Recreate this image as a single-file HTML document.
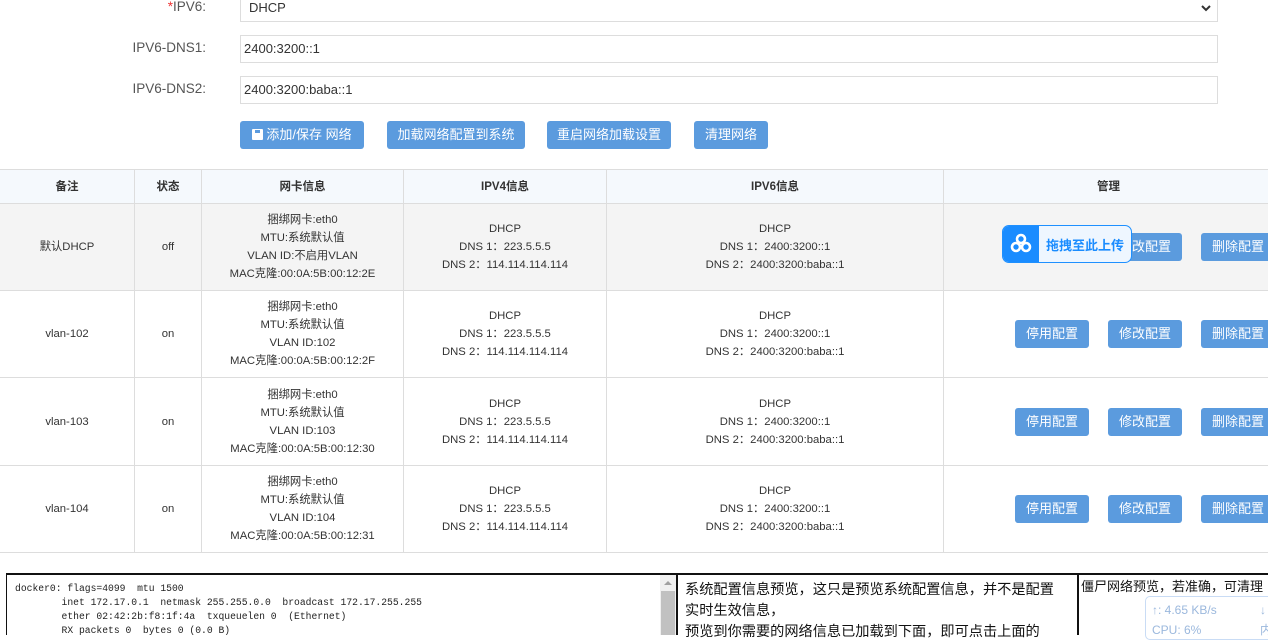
<!DOCTYPE html>
<html><head><meta charset="utf-8"><style>
*{box-sizing:border-box;margin:0;padding:0}
body{width:1268px;height:635px;overflow:hidden;background:#fff;font-family:"Liberation Sans","Noto Sans CJK SC",sans-serif;color:#333;position:relative;font-size:12px}
.abs{position:absolute}
.lbl{position:absolute;right:1062px;font-size:13.5px;color:#555;text-align:right}
.inp{position:absolute;left:240px;width:978px;height:28px;border:1px solid #ddd;background:#fff;font-size:13px;padding:0 3px;line-height:26px;color:#333}
.btn{position:absolute;background:#5b9bde;color:#fff;border-radius:3px;font-size:13px;text-align:center;height:28px;line-height:28px}
.cell{position:absolute;text-align:center;font-size:11.3px;line-height:18px;display:flex;align-items:center;justify-content:center;flex-direction:column;border-right:1px solid #ddd;border-bottom:1px solid #ddd}
.hd{font-weight:bold;font-size:11.5px;background:#f5f9fd}
.rb{position:absolute;width:74px;height:28px;line-height:28px;background:#5b9bde;color:#fff;border-radius:3px;font-size:13px;text-align:center}
pre{font-family:"Liberation Mono",monospace;font-size:9.7px;line-height:14px;color:#222}
</style></head><body>
<div class="lbl" style="top:-1px"><span style="color:#e33">*</span>IPV6:</div>
<div class="inp" style="top:-6px;padding-left:8px">DHCP<svg class="abs" style="right:6px;top:10px" width="10" height="7" viewBox="0 0 10 7"><path d="M1 1l4 4 4-4" stroke="#333" stroke-width="2" fill="none"/></svg></div>
<div class="lbl" style="top:40px">IPV6-DNS1:</div>
<div class="inp" style="top:35px">2400:3200::1</div>
<div class="lbl" style="top:81px">IPV6-DNS2:</div>
<div class="inp" style="top:76px">2400:3200:baba::1</div>
<div class="btn" style="left:240px;top:121px;width:124px"><span style="display:inline-block;width:11px;height:11px;background:#fff;vertical-align:-1px;margin-right:3px;border-radius:1px;position:relative"><span style="position:absolute;left:3px;top:1px;width:5px;height:3px;background:#5b9bde"></span></span>添加/保存 网络</div>
<div class="btn" style="left:387px;top:121px;width:138px">加载网络配置到系统</div>
<div class="btn" style="left:547px;top:121px;width:124px">重启网络加载设置</div>
<div class="btn" style="left:694px;top:121px;width:74px">清理网络</div>

<div class="abs" style="left:0;top:169px;width:1268px;height:1px;background:#ddd"></div>
<div class="cell hd" style="left:0;top:170px;width:135px;height:34px">备注</div>
<div class="cell hd" style="left:135px;top:170px;width:67px;height:34px">状态</div>
<div class="cell hd" style="left:202px;top:170px;width:202px;height:34px">网卡信息</div>
<div class="cell hd" style="left:404px;top:170px;width:203px;height:34px">IPV4信息</div>
<div class="cell hd" style="left:607px;top:170px;width:337px;height:34px">IPV6信息</div>
<div class="cell hd" style="left:944px;top:170px;width:330px;height:34px">管理</div>

<div class="abs" style="left:0;top:204px;width:1268px;height:87px;background:#f4f4f4"></div>
<div class="cell" style="left:0;top:204px;width:135px;height:87px">默认DHCP</div>
<div class="cell" style="left:135px;top:204px;width:67px;height:87px">off</div>
<div class="cell" style="left:202px;top:204px;width:202px;height:87px">捆绑网卡:eth0<br>MTU:系统默认值<br>VLAN ID:不启用VLAN<br>MAC克隆:00:0A:5B:00:12:2E</div>
<div class="cell" style="left:404px;top:204px;width:203px;height:87px">DHCP<br>DNS 1：223.5.5.5<br>DNS 2：114.114.114.114</div>
<div class="cell" style="left:607px;top:204px;width:337px;height:87px">DHCP<br>DNS 1：2400:3200::1<br>DNS 2：2400:3200:baba::1</div>
<div class="cell" style="left:944px;top:204px;width:330px;height:87px"></div>
<div class="rb" style="left:1108px;top:233px">修改配置</div>
<div class="rb" style="left:1201px;top:233px">删除配置</div>
<div class="abs" style="left:1002px;top:225px;width:130px;height:38px;border:1px solid #1e90ff;border-radius:7px;background:#eef6ff"></div>
<div class="abs" style="left:1003px;top:226px;width:36px;height:36px;background:#1a8cff;border-radius:6px 0 0 6px"><svg width="36" height="36" viewBox="0 0 36 36"><g fill="none" stroke="#fff" stroke-width="2.6"><circle cx="18" cy="13" r="4"/><circle cx="13" cy="21" r="4"/><circle cx="23" cy="21" r="4"/></g></svg></div>
<div class="abs" style="left:1046px;top:235px;font-size:13px;font-weight:bold;color:#1a8cff">拖拽至此上传</div>

<div class="cell" style="left:0;top:291px;width:135px;height:87px">vlan-102</div>
<div class="cell" style="left:135px;top:291px;width:67px;height:87px">on</div>
<div class="cell" style="left:202px;top:291px;width:202px;height:87px">捆绑网卡:eth0<br>MTU:系统默认值<br>VLAN ID:102<br>MAC克隆:00:0A:5B:00:12:2F</div>
<div class="cell" style="left:404px;top:291px;width:203px;height:87px">DHCP<br>DNS 1：223.5.5.5<br>DNS 2：114.114.114.114</div>
<div class="cell" style="left:607px;top:291px;width:337px;height:87px">DHCP<br>DNS 1：2400:3200::1<br>DNS 2：2400:3200:baba::1</div>
<div class="cell" style="left:944px;top:291px;width:330px;height:87px"></div>
<div class="rb" style="left:1015px;top:320px">停用配置</div>
<div class="rb" style="left:1108px;top:320px">修改配置</div>
<div class="rb" style="left:1201px;top:320px">删除配置</div>

<div class="cell" style="left:0;top:378px;width:135px;height:88px">vlan-103</div>
<div class="cell" style="left:135px;top:378px;width:67px;height:88px">on</div>
<div class="cell" style="left:202px;top:378px;width:202px;height:88px">捆绑网卡:eth0<br>MTU:系统默认值<br>VLAN ID:103<br>MAC克隆:00:0A:5B:00:12:30</div>
<div class="cell" style="left:404px;top:378px;width:203px;height:88px">DHCP<br>DNS 1：223.5.5.5<br>DNS 2：114.114.114.114</div>
<div class="cell" style="left:607px;top:378px;width:337px;height:88px">DHCP<br>DNS 1：2400:3200::1<br>DNS 2：2400:3200:baba::1</div>
<div class="cell" style="left:944px;top:378px;width:330px;height:88px"></div>
<div class="rb" style="left:1015px;top:408px">停用配置</div>
<div class="rb" style="left:1108px;top:408px">修改配置</div>
<div class="rb" style="left:1201px;top:408px">删除配置</div>

<div class="cell" style="left:0;top:466px;width:135px;height:87px">vlan-104</div>
<div class="cell" style="left:135px;top:466px;width:67px;height:87px">on</div>
<div class="cell" style="left:202px;top:466px;width:202px;height:87px">捆绑网卡:eth0<br>MTU:系统默认值<br>VLAN ID:104<br>MAC克隆:00:0A:5B:00:12:31</div>
<div class="cell" style="left:404px;top:466px;width:203px;height:87px">DHCP<br>DNS 1：223.5.5.5<br>DNS 2：114.114.114.114</div>
<div class="cell" style="left:607px;top:466px;width:337px;height:87px">DHCP<br>DNS 1：2400:3200::1<br>DNS 2：2400:3200:baba::1</div>
<div class="cell" style="left:944px;top:466px;width:330px;height:87px"></div>
<div class="rb" style="left:1015px;top:495px">停用配置</div>
<div class="rb" style="left:1108px;top:495px">修改配置</div>
<div class="rb" style="left:1201px;top:495px">删除配置</div>

<div class="abs" style="left:6px;top:573px;width:1262px;height:2px;background:#111"></div>
<div class="abs" style="left:6px;top:573px;width:1px;height:62px;background:#111"></div>
<pre class="abs" style="left:15px;top:582px">docker0: flags=4099  mtu 1500
        inet 172.17.0.1  netmask 255.255.0.0  broadcast 172.17.255.255
        ether 02:42:2b:f8:1f:4a  txqueuelen 0  (Ethernet)
        RX packets 0  bytes 0 (0.0 B)</pre>
<div class="abs" style="left:660px;top:575px;width:16px;height:60px;background:#f0f0f0"></div>
<div class="abs" style="left:661px;top:591px;width:14px;height:44px;background:#c1c1c1"></div>
<div class="abs" style="left:664px;top:581px;width:0;height:0;border-left:4px solid transparent;border-right:4px solid transparent;border-bottom:4px solid #a0a0a0"></div>
<div class="abs" style="left:676px;top:573px;width:2px;height:62px;background:#111"></div>
<div class="abs" style="left:685px;top:580px;font-size:14.2px;line-height:21px;color:#111;width:390px;white-space:nowrap">系统配置信息预览，这只是预览系统配置信息，并不是配置<br>实时生效信息，<br>预览到你需要的网络信息已加载到下面，即可点击上面的</div>
<div class="abs" style="left:1077px;top:573px;width:2px;height:62px;background:#111"></div>
<div class="abs" style="left:1081px;top:576px;font-size:13px;color:#111">僵尸网络预览，若准确，可清理</div>
<div class="abs" style="left:1145px;top:596px;width:130px;height:44px;border:1px solid #c9dcf5;border-radius:5px;background:#fff;font-size:12px;color:#9bb8dd;padding:3px 6px;line-height:20px">↑: 4.65 KB/s<span style="position:absolute;left:114px">↓</span><br>CPU: 6%<span style="position:absolute;left:114px">内</span></div>
</body></html>
